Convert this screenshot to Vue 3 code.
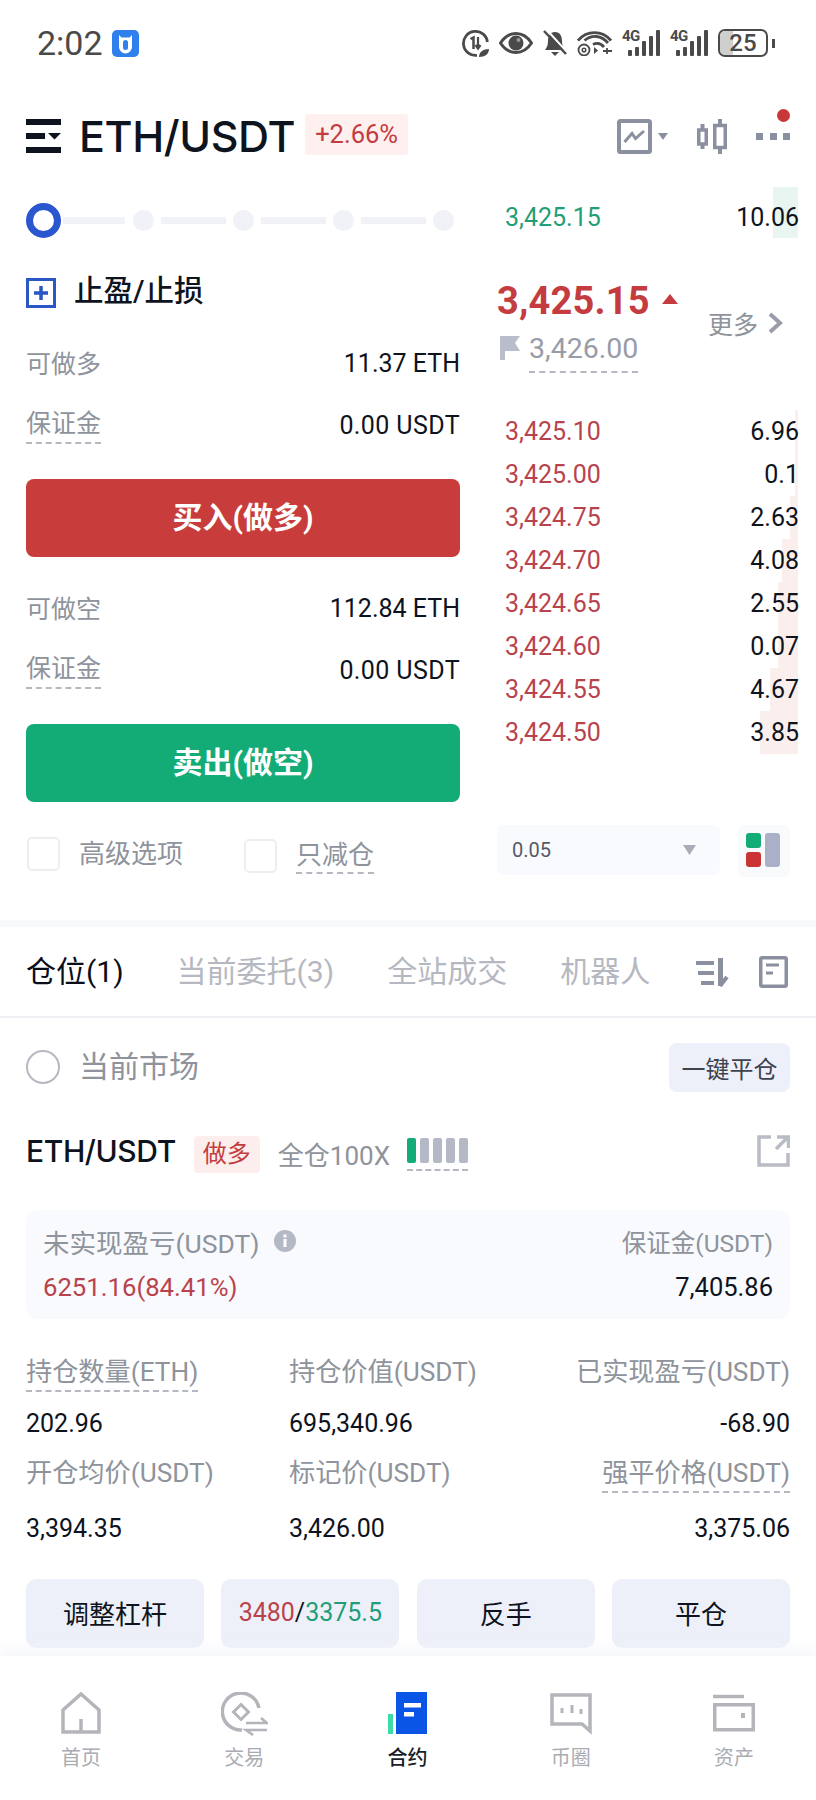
<script setup>
const asks = [
  { p: '3,425.10', q: '6.96', w: 3 },
  { p: '3,425.00', q: '0.1', w: 3 },
  { p: '3,424.75', q: '2.63', w: 8 },
  { p: '3,424.70', q: '4.08', w: 16 },
  { p: '3,424.65', q: '2.55', w: 20 },
  { p: '3,424.60', q: '0.07', w: 20 },
  { p: '3,424.55', q: '4.67', w: 28 },
  { p: '3,424.50', q: '3.85', w: 38 },
]
const tabs = ['当前委托(3)', '全站成交', '机器人']
const stats = [
  { l: '持仓数量(ETH)', v: '202.96', dash: true },
  { l: '持仓价值(USDT)', v: '695,340.96' },
  { l: '已实现盈亏(USDT)', v: '-68.90' },
  { l: '开仓均价(USDT)', v: '3,394.35' },
  { l: '标记价(USDT)', v: '3,426.00' },
  { l: '强平价格(USDT)', v: '3,375.06', dash: true },
]
const signalBars = [6, 9, 15, 20, 26]
</script>

<template>
  <div class="page">
    <div class="status">
      <span class="time">2:02</span>
      <svg class="appicon" width="27" height="27" viewBox="0 0 27 27">
        <rect width="27" height="27" rx="5" fill="#2f80ed" />
        <path d="M7 5l2.500 2.500h8L20 5v12a6.500 6.500 0 0 1-13 0z" fill="#fff" />
        <rect x="11" y="10" width="5" height="10" rx="2.500" fill="#2f80ed" />
      </svg>
      <div class="sysicons">
        <svg width="27" height="27" viewBox="0 0 27 27" fill="none" stroke="#4a4a4a">
          <path d="M15 25.300A12 12 0 1 1 25.400 12" stroke-width="2.800" />
          <path d="M8.500 9l3-1.500V19" stroke-width="2.500" />
          <path d="M16 7v11M13.500 15l2.500 3.500 2.500-3.500" stroke-width="2.200" />
          <path d="M17 27c0-5 4-8 10-8 0 5-4 8-10 8z" fill="#4a4a4a" stroke="none" />
        </svg>
        <svg width="34" height="22" viewBox="0 0 34 22">
          <path d="M1.500 11C6 4 11 1.500 17 1.500S28 4 32.500 11C28 18 23 20.500 17 20.500S6 18 1.500 11z" fill="none" stroke="#4a4a4a" stroke-width="3" />
          <circle cx="17" cy="11" r="7.500" fill="#4a4a4a" />
          <circle cx="19.500" cy="8" r="2" fill="#9a9a9a" />
        </svg>
        <svg width="24" height="26" viewBox="0 0 24 26">
          <path d="M12 2C7 2 5 6 5 11c0 4-1 6-3 9h20c-2-3-3-5-3-9 0-5-2-9-7-9z" fill="#4a4a4a" />
          <path d="M8 22h8l-4 4z" fill="#4a4a4a" />
          <path d="M3.500-.5L24 22" stroke="#fff" stroke-width="2" />
          <path d="M1 1l22 23" stroke="#4a4a4a" stroke-width="2.500" />
        </svg>
        <svg width="35" height="26" viewBox="0 0 35 26" fill="none" stroke="#4a4a4a" stroke-width="2.800">
          <path d="M1 10.500C10 0 25 0 34 10.500" />
          <path d="M7.500 10.500C15 4.500 24 5 31 13" />
          <path d="M16 14.500C20 12.500 24 13.500 27 17" />
          <circle cx="7" cy="20" r="5.500" stroke-width="1.800" />
          <circle cx="7" cy="20" r="1.800" stroke-width="1.500" />
          <path d="M17 17l4 3.500-4 3.500z" fill="#4a4a4a" stroke="none" />
          <path d="M26 21h9M30 18v6" stroke-width="1.800" />
        </svg>
        <div v-for="n in 2" :key="n" class="signal">
          <span class="g4">4G</span>
          <i v-for="h in signalBars" :key="h" :style="{ height: h + 'px' }"></i>
        </div>
        <div class="battery"><div class="batfill"></div><span>25</span></div>
        <div class="batnub"></div>
      </div>
    </div>

    <header class="head">
      <svg width="35" height="34" viewBox="0 0 35 34" fill="#0e1320">
        <rect width="35" height="6" />
        <rect y="14" width="19" height="6" />
        <path d="M22 14h13l-6.500 6.500z" />
        <rect y="28" width="35" height="6" />
      </svg>
      <h1 class="title">ETH/USDT</h1>
      <span class="badge">+2.66%</span>
      <div class="headicons">
        <svg width="35" height="35" viewBox="0 0 35 35" fill="none" stroke="#8b90a0" stroke-width="4">
          <rect x="2" y="2" width="31" height="31" rx="1.500" />
          <path d="M7.500 23l7.500-8.500 3.500 5 8.500-7.500" stroke-width="3" />
        </svg>
        <svg class="hcaret" width="10" height="7" viewBox="0 0 10 7"><path d="M0 0h10L5 7z" fill="#8b90a0" /></svg>
        <svg class="candle" width="30" height="35" viewBox="0 0 30 35" fill="none" stroke="#8b90a0" stroke-width="3.500">
          <rect x="1.750" y="11" width="7.500" height="14" />
          <rect x="17.750" y="6.500" width="10.500" height="22" />
          <path d="M5.500 5v6M5.500 25v5M23 0v6.500M23 28.500V35" stroke-width="4" />
        </svg>
        <div class="more">
          <span class="reddot"></span>
          <i></i><i></i><i></i>
        </div>
      </div>
    </header>

    <section class="trade">
      <div class="left">
        <div class="slider">
          <span class="ring"></span>
          <template v-for="n in 4" :key="n">
            <span class="track"></span>
            <span class="stop"></span>
          </template>
        </div>
        <div class="tpsl">
          <svg width="30" height="30" viewBox="0 0 30 30" fill="none" stroke="#2a56c6">
            <rect x="1.500" y="1.500" width="27" height="27" stroke-width="3" />
            <path d="M15 8v14M8 15h14" stroke-width="3.500" />
          </svg>
          <span>止盈/止损</span>
        </div>
        <div class="inforow first"><span class="lab">可做多</span><span class="val">11.37 ETH</span></div>
        <div class="inforow"><span class="lab dash">保证金</span><span class="val wide">0.00 USDT</span></div>
        <button class="bigbtn buy">买入(做多)</button>
        <div class="inforow after"><span class="lab">可做空</span><span class="val">112.84 ETH</span></div>
        <div class="inforow"><span class="lab dash">保证金</span><span class="val wide">0.00 USDT</span></div>
        <button class="bigbtn sell">卖出(做空)</button>
        <div class="opts">
          <span class="check"></span><span class="lab optlab">高级选项</span>
          <span class="check second"></span><span class="lab optlab dash">只减仓</span>
        </div>
      </div>

      <div class="right">
        <div class="bookrow bid">
          <span class="depth green" style="width: 25px"></span>
          <span class="price up">3,425.15</span><span class="qty">10.06</span>
        </div>
        <div class="mid">
          <div class="midleft">
            <div class="last">3,425.15<svg width="16" height="10" viewBox="0 0 16 10"><path d="M8 0l8 10H0z" fill="#c43c40" /></svg></div>
            <div class="mark">
              <svg class="flag" width="20" height="24" viewBox="0 0 20 24"><path d="M0 0h20l-5 7 5 8H5v9H0z" fill="#b9bdcb" /></svg>
              <span class="markval">3,426.00</span>
            </div>
          </div>
          <div class="moreb">
            <span>更多</span>
            <svg width="15" height="22" viewBox="0 0 15 22" fill="none" stroke="#9a9eac" stroke-width="4"><path d="M2 2l10 9-10 9" /></svg>
          </div>
        </div>
        <div class="asks">
          <div v-for="a in asks" :key="a.p" class="bookrow ask">
            <span class="depth" :style="{ width: a.w + 'px' }"></span>
            <span class="price down">{{ a.p }}</span><span class="qty">{{ a.q }}</span>
          </div>
        </div>
        <div class="bookctl">
          <div class="select"><span>0.05</span><svg width="13" height="10" viewBox="0 0 13 10"><path d="M0 0h13L6.500 10z" fill="#a9adb8" /></svg></div>
          <div class="layout">
            <div class="lcol"><i class="sq g"></i><i class="sq r"></i></div>
            <i class="tall"></i>
          </div>
        </div>
      </div>
    </section>

    <div class="band"></div>

    <nav class="tabs">
      <span class="tab on">仓位(1)</span>
      <span v-for="t in tabs" :key="t" class="tab">{{ t }}</span>
      <svg class="sorti" width="33" height="30" viewBox="0 0 33 30" fill="none" stroke="#8b90a0" stroke-width="4">
        <path d="M0 6h18M2 16h16M5 26h13" />
        <path d="M24.500 1v28" stroke-width="5" />
        <path d="M24 29l7-9" stroke-width="4" />
      </svg>
      <svg class="doci" width="29" height="32" viewBox="0 0 29 32" fill="none" stroke="#8b90a0" stroke-width="3.500">
        <rect x="1.750" y="1.750" width="25.500" height="28.500" rx="1.500" />
        <path d="M7 9h13M7 17h7" stroke-width="3" />
      </svg>
    </nav>

    <div class="market">
      <span class="radio"></span>
      <span class="mtext">当前市场</span>
      <button class="closeall">一键平仓</button>
    </div>

    <div class="pos">
      <span class="sym">ETH/USDT</span>
      <span class="tag">做多</span>
      <span class="lev">全仓100X</span>
      <div class="risk">
        <i class="on"></i><i></i><i></i><i></i><i></i>
      </div>
      <svg class="ext" width="33" height="32" viewBox="0 0 33 32" fill="none" stroke="#b9bcc5" stroke-width="3.500">
        <path d="M14 2H2v28h29V18M19 14L31 2M20 2h11.500v11" />
      </svg>
    </div>

    <div class="pnl">
      <div class="pnlrow">
        <span class="glabel big">未实现盈亏(USDT)<svg class="info" width="22" height="22" viewBox="0 0 22 22"><circle cx="11" cy="11" r="11" fill="#b4b9c6" /><rect x="9.500" y="9" width="3" height="8" fill="#fff" /><rect x="9.500" y="4.500" width="3" height="3" fill="#fff" /></svg></span>
        <span class="glabel">保证金(USDT)</span>
      </div>
      <div class="pnlrow vals">
        <span class="redv">6251.16(84.41%)</span>
        <span class="blackv">7,405.86</span>
      </div>
    </div>

    <div class="stats">
      <div v-for="s in stats" :key="s.l" class="stat">
        <span class="glabel slabel" :class="{ dashed: s.dash }">{{ s.l }}</span>
        <span class="blackv sval">{{ s.v }}</span>
      </div>
    </div>

    <div class="actions">
      <button class="act">调整杠杆</button>
      <button class="act num"><span class="down">3480</span>/<span class="up">3375.5</span></button>
      <button class="act">反手</button>
      <button class="act">平仓</button>
    </div>

    <footer class="nav">
      <div class="navitem">
        <svg width="40" height="44" viewBox="0 0 40 44" fill="none" stroke="#b3b5bb" stroke-width="3.500">
          <path d="M2 40V18L20 2l18 16v22zM20 27v13" />
        </svg>
        <span>首页</span>
      </div>
      <div class="navitem">
        <svg width="47" height="44" viewBox="0 0 47 44" fill="none" stroke="#b3b5bb" stroke-width="3.500">
          <path d="M38 16A18.500 18.500 0 1 0 21 38" />
          <path d="M20 12.500l7.500 7.500-7.500 7.500-7.500-7.500z" stroke-width="3" />
          <path d="M25 31h21l-6-5M46 38H25l7 5" stroke-width="2.600" />
        </svg>
        <span>交易</span>
      </div>
      <div class="navitem active">
        <svg width="40" height="44" viewBox="0 0 40 44">
          <rect x="0" y="22" width="5" height="20" fill="#3bdca6" />
          <rect x="8" y="0" width="31" height="42" fill="#0b55e6" />
          <rect x="16" y="11" width="17" height="4.500" fill="#fff" />
          <rect x="16" y="20" width="10" height="4.500" fill="#fff" />
        </svg>
        <span>合约</span>
      </div>
      <div class="navitem">
        <svg width="42" height="44" viewBox="0 0 42 44" fill="none" stroke="#b3b5bb" stroke-width="3.500">
          <path d="M2 3h38v36l-8-7H2z" />
          <path d="M12 16v5M22 13v8M31 17v5" stroke-width="3" />
        </svg>
        <span>币圈</span>
      </div>
      <div class="navitem">
        <svg width="42" height="44" viewBox="0 0 42 44" fill="none" stroke="#b3b5bb" stroke-width="3.500">
          <path d="M0 4.500h31" />
          <rect x="1.750" y="12.750" width="38.500" height="25" />
          <rect x="28" y="21" width="4" height="5" fill="#b3b5bb" stroke="none" />
        </svg>
        <span>资产</span>
      </div>
    </footer>
  </div>
</template>

<style scoped>
.page {
  width: 816px;
  height: 1800px;
  overflow: hidden;
  background: #fff;
  font-family: Roboto, "Noto Sans CJK SC", sans-serif;
  color: #0e1320;
  display: flex;
  flex-direction: column;
}
button { font-family: inherit; border: 0; padding: 0; }

.status { height: 86px; display: flex; align-items: center; padding: 0 41px 0 37px; box-sizing: border-box; flex: none; }
.time { font-size: 34px; color: #4a4a4a; line-height: 1; }
.appicon { margin-left: 9px; }
.sysicons { margin-left: auto; display: flex; align-items: center; gap: 10px; }
.signal { position: relative; width: 38px; height: 26px; display: flex; align-items: flex-end; justify-content: flex-end; gap: 3px; }
.signal i { width: 4px; background: #4a4a4a; border-radius: 1px; }
.g4 { position: absolute; left: 0; top: -1px; font-size: 15px; line-height: 1; font-weight: 700; letter-spacing: -0.6px; color: #4a4a4a; }
.battery { position: relative; width: 50px; height: 28px; border: 2px solid #4a4a4a; border-radius: 7px; box-sizing: border-box; overflow: hidden; display: flex; align-items: center; justify-content: center; }
.batfill { position: absolute; left: 0; top: 0; bottom: 0; width: 13px; background: #cfcfcf; }
.battery span { position: relative; font-size: 24px; font-weight: 500; color: #4a4a4a; line-height: 1; }
.batnub { width: 3px; height: 9px; background: #4a4a4a; margin-left: -6px; }

.head { height: 100px; display: flex; align-items: center; padding: 0 26px; box-sizing: border-box; flex: none; }
.title { margin: 0 0 0 18px; font-family: Inter, sans-serif; font-weight: 500; font-size: 43px; letter-spacing: -0.4px; line-height: 1; }
.badge { margin-left: 10px; margin-top: -4px; height: 41px; line-height: 41px; padding: 0 10px; background: #fdf0ef; color: #c43c40; font-size: 25.500px; border-radius: 3px; }
.headicons { margin-left: auto; display: flex; align-items: center; }
.hcaret { margin-left: 6px; }
.candle { margin-left: 29px; }
.more { position: relative; margin-left: 29px; width: 34px; display: flex; justify-content: space-between; }
.more i { width: 7px; height: 7px; background: #8b90a0; }
.reddot { position: absolute; right: 0; top: -24px; width: 13px; height: 13px; border-radius: 50%; background: #c8383a; }

.trade { display: flex; height: 734px; box-sizing: border-box; padding: 0 18px 0 26px; flex: none; }
.left { width: 434px; padding-top: 17px; flex: none; }
.slider { height: 34px; display: flex; align-items: center; width: 429px; }
.ring { width: 35px; height: 35px; border: 7px solid #2a56d0; border-radius: 50%; box-sizing: border-box; flex: none; }
.track { width: 62px; height: 7px; background: #f0f2f8; margin: 0 7.500px 0 2px; flex: none; }
.track ~ .track { width: 65px; margin: 0 7px; }
.stop { width: 21px; height: 21px; border-radius: 50%; background: #f0f2f8; flex: none; }
.tpsl { margin-top: 41px; display: flex; align-items: center; gap: 18px; font-size: 29.500px; font-weight: 500; height: 30px; line-height: 1; }
.tpsl span { position: relative; top: -1px; }
.inforow { height: 60px; display: flex; align-items: center; justify-content: space-between; }
.inforow.first { margin-top: 25px; }
.inforow.after { margin-top: 21px; }
.lab { font-size: 25px; color: #8e939c; margin-top: -2px; }
.dash { border-bottom: 2px dashed #b5b8c0; line-height: 1.3; padding-bottom: 2px; }
.inforow .dash { margin-top: 6px; }
.val { font-size: 25px; color: #0e1320; }
.val.wide { letter-spacing: 0.4px; margin-top: 4px; }
.bigbtn { display: block; width: 434px; height: 78px; padding-bottom: 6px; border-radius: 8px; color: #fff; font-size: 30px; font-weight: 700; }
.buy { margin-top: 26px; background: #c83c3c; }
.sell { margin-top: 26px; background: #14ac76; }
.opts { margin-top: 34px; display: flex; align-items: center; height: 36px; }
.check { width: 33px; height: 34px; border: 2px solid #eceef2; border-radius: 5px; box-sizing: border-box; margin: 0 19px 0 1px; flex: none; }
.check.second { margin-left: 61px; position: relative; top: 2px; }
.optlab { font-size: 26px; line-height: 1; margin-top: 0; }
.optlab.dash { position: relative; top: 3px; line-height: 1.2; padding-bottom: 0; }

.right { margin-left: 37px; flex: 1; }
.bookrow { position: relative; display: flex; align-items: center; justify-content: space-between; padding-left: 8px; }
.bid { height: 51px; margin-top: 1px; padding-top: 10px; box-sizing: border-box; }
.depth { position: absolute; right: 0; top: 0; bottom: 0; background: #fbefee; }
.depth.green { background: #e8f5f0; }
.price, .qty { position: relative; font-size: 25px; }
.qty { right: -1px; }
.up { color: #1f9e78; }
.down { color: #b9434d; }
.mid { display: flex; height: 172px; }
.midleft { padding-top: 41px; }
.last { font-size: 38px; font-weight: 700; color: #c43c40; line-height: 44px; letter-spacing: 0.2px; display: flex; align-items: center; gap: 12px; }
.last svg { position: relative; top: -2px; }
.mark { display: flex; align-items: flex-start; gap: 9px; margin-left: 3px; margin-top: 10px; }
.flag { position: relative; top: 3px; }
.markval { font-size: 28.500px; color: #989ca8; line-height: 34px; border-bottom: 2px dashed #b5b8c0; padding-bottom: 5px; margin-top: -1px; }
.moreb { margin-left: auto; margin-right: 15px; margin-top: 68px; height: 34px; display: flex; align-items: center; gap: 10px; color: #8e939c; font-size: 25px; }
.ask { height: 43px; }
.bookctl { margin-top: 71px; display: flex; }
.select { width: 223px; height: 50px; background: #f9fafd; border-radius: 6px; box-sizing: border-box; padding: 0 24px 0 15px; display: flex; align-items: center; justify-content: space-between; font-size: 20px; color: #555a66; }
.layout { margin-left: 18px; width: 52px; height: 52px; background: #f9fafc; border-radius: 6px; display: flex; gap: 4px; padding: 8px; box-sizing: border-box; }
.lcol { display: flex; flex-direction: column; gap: 4px; }
.sq { display: block; width: 15px; height: 15px; border-radius: 3px; }
.sq.g { background: #14ac76; }
.sq.r { background: #cb3434; }
.tall { display: block; width: 15px; height: 34px; border-radius: 3px; background: #a9b0c8; }

.band { height: 7px; background: #f8f9fb; flex: none; }
.tabs { height: 89px; border-bottom: 2px solid #eef0f3; display: flex; align-items: center; padding: 0 28px 0 26px; flex: none; }
.tab { font-size: 30px; color: #b5b8c0; white-space: nowrap; margin-right: 53px; line-height: 1; }
.tab.on { color: #0a0e18; }
.tab:nth-child(4) { margin-right: 0; }
.sorti { margin-left: auto; }
.doci { margin-left: 30px; }

.market { margin-top: 25px; height: 49px; display: flex; align-items: center; padding: 0 26px; flex: none; }
.radio { width: 34px; height: 34px; border-radius: 50%; border: 2px solid #b5b8c0; box-sizing: border-box; margin-top: -2px; }
.mtext { margin-left: 19px; margin-top: -2px; font-size: 30px; line-height: 1; color: #8e939c; }
.closeall { margin-left: auto; width: 121px; height: 49px; border-radius: 8px; background: #eef0f9; font-size: 24px; color: #3e4350; }

.pos { margin-top: 44px; height: 37px; display: flex; align-items: center; padding: 0 26px; flex: none; }
.sym { font-family: Inter, sans-serif; font-size: 30px; font-weight: 500; letter-spacing: -0.4px; margin-top: -8px; line-height: 1; }
.tag { margin-left: 18px; width: 66px; height: 37px; line-height: 37px; text-align: center; background: #fbeeec; color: #c43c40; font-size: 24px; border-radius: 4px; }
.lev { margin-left: 18px; margin-top: -2px; font-size: 26px; color: #8e939c; }
.risk { margin-left: 17px; display: flex; gap: 4px; border-bottom: 2px dashed #b5b8c0; padding-bottom: 6px; }
.risk i { display: block; width: 9px; height: 25px; border-radius: 2px; background: #b5b9c6; }
.risk i.on { background: #14ac76; }
.ext { margin-left: auto; margin-top: -8px; }

.pnl { margin: 37px 26px 0; height: 109px; background: #f9fafd; border-radius: 12px; padding: 15px 17px 0; box-sizing: border-box; flex: none; }
.pnlrow { display: flex; justify-content: space-between; align-items: center; height: 32px; }
.pnlrow.vals { margin-top: 14px; }
.glabel { font-size: 24.500px; color: #8e939c; white-space: nowrap; display: inline-flex; align-items: center; }
.glabel.big { font-size: 26.500px; }
.info { margin-left: 14px; }
.redv { font-size: 25.700px; color: #b9434d; }
.blackv { font-size: 25.500px; color: #0e1320; }

.stats { margin-top: 37px; padding: 0 26px; display: grid; grid-template-columns: 263px 1fr auto; row-gap: 16px; flex: none; }
.stat { display: flex; flex-direction: column; align-items: flex-start; gap: 15px; }
.stat:nth-child(3n) { align-items: flex-end; }
.stat:nth-child(n+4) { gap: 19px; }
.glabel.slabel { font-size: 26.200px; line-height: 32px; height: 36px; box-sizing: border-box; border-bottom: 2px solid transparent; padding-bottom: 2px; }
.slabel.dashed { border-bottom: 2px dashed #b5b8c0; }
.blackv.sval { font-size: 25px; line-height: 34px; }

.actions { margin-top: 33px; padding: 0 26px; display: flex; justify-content: space-between; flex: none; }
.act { width: 178px; height: 69px; padding-bottom: 3px; background: #edf0f9; border-radius: 10px; font-size: 26px; color: #0e1320; }
.act.num { font-size: 25px; }

.nav { margin-top: 8px; flex: 1; display: flex; padding: 36px 22px 0 21px; box-shadow: 0 -8px 14px rgba(240, 242, 248, 0.6); box-sizing: border-box; position: relative; justify-content: space-between; background: #fff; }
.navitem { flex: none; width: 120px; display: flex; flex-direction: column; align-items: center; gap: 8px; font-size: 20px; color: #a9acb3; line-height: 28px; }
.navitem svg { display: block; }
.active { color: #1a1e28; font-weight: 500; }
</style>
